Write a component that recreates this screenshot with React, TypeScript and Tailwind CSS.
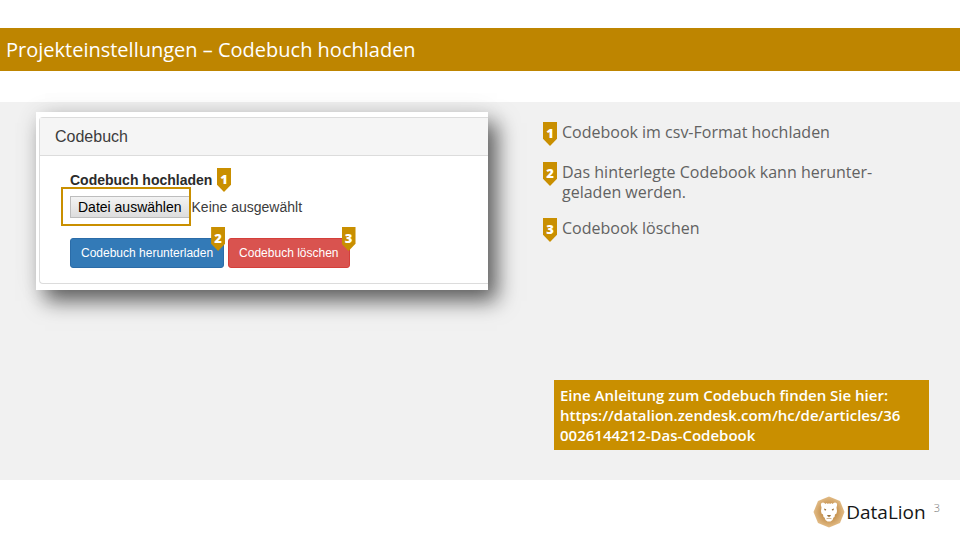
import type { ReactNode } from "react";

function Marker({ n, className = "" }: { n: number; className?: string }) {
  return (
    <span
      className={`flex h-6 w-[14px] shrink-0 justify-center bg-[#c98f00] pt-[3px] font-['Open_Sans','Noto_Sans',sans-serif] text-[13px] leading-4 font-extrabold text-white [clip-path:polygon(0_0,100%_0,100%_70%,50%_100%,0_70%)] ${className}`}
    >
      {n}
    </span>
  );
}

function Step({ n, children }: { n: number; children: ReactNode }) {
  return (
    <li className="flex gap-[5px]">
      <Marker n={n} />
      <p>{children}</p>
    </li>
  );
}

function UploadPanel() {
  return (
    <section className="bg-white pt-[5px] pb-[6px] pl-[3px] font-['Liberation_Sans',Arial,sans-serif] shadow-[9px_11px_20px_rgba(0,0,0,0.6),0_0_24px_rgba(0,0,0,0.07)]">
      <div className="rounded-l border border-r-0 border-[#dcdcdc]">
        <h2 className="border-b border-[#dcdcdc] bg-[#f5f5f5] pt-[7px] pb-[6px] pl-[15px] text-base leading-6 text-[#3c3c3c]">
          Codebuch
        </h2>
        <div className="px-[30px] pt-4 pb-[15px]">
          <label htmlFor="codebook" className="block text-sm leading-4 font-bold text-[#2b2b2b]">
            Codebuch hochladen
          </label>
          <div className="relative mt-2 flex items-center gap-[2px] text-sm leading-5">
            <input id="codebook" type="file" className="sr-only" />
            <label
              htmlFor="codebook"
              className="border border-[#bdbdbd] bg-linear-to-b from-[#f3f3f3] to-[#dddddd] px-[7px] text-black"
            >
              Datei auswählen
            </label>
            <span className="text-[#3c3c3c]">Keine ausgewählt</span>
            <span className="absolute -top-[9px] -left-[9px] h-[39px] w-[130px] border-2 border-[#c98f00]" />
            <Marker n={1} className="absolute -top-7 left-[147px]" />
          </div>
          <div className="mt-5 flex gap-1 text-[12px] leading-4 text-white">
            <div className="relative">
              <button type="button" className="rounded-[3px] border border-[#2b6ca8] bg-[#337ab7] px-[10px] py-[6px]">
                Codebuch herunterladen
              </button>
              <Marker n={2} className="absolute -top-[11px] -right-px" />
            </div>
            <div className="relative">
              <button type="button" className="rounded-[3px] border border-[#d43f3a] bg-[#d9534f] px-[10px] py-[6px]">
                Codebuch löschen
              </button>
              <Marker n={3} className="absolute -top-[11px] -right-[6px]" />
            </div>
          </div>
        </div>
      </div>
    </section>
  );
}

function Logo() {
  return (
    <div className="flex items-center gap-px">
      <svg viewBox="0 0 32 32" className="size-8" aria-hidden="true">
        <defs>
          <radialGradient id="mane">
            <stop offset="0.35" stopColor="#c08a45" />
            <stop offset="1" stopColor="#e3bd88" />
          </radialGradient>
        </defs>
        <path d="M16 0.5 27 5 31.5 16 27 27 16 31.5 5 27 0.5 16 5 5Z" fill="url(#mane)" />
        <path
          d="M8 9.500Q7.500 6.500 10 6.500Q11.500 6.500 12.500 8L13.500 7 15 8 16 7 17 8 18.500 7 19.500 8Q20.500 6.500 22 6.500Q24.500 6.500 24 9.500L23.500 11.500 24 15 23.500 17.500 22 18.500 21.500 21 20.500 21.500 19.500 24 17.500 25.500H14.500L12.500 24 11.500 21.500 10.500 21 10 18.500 8.500 17.500 8 15 8.500 11.500Z"
          fill="#fff"
        />
        <path
          d="M11 12.500 13.200 13.300 13 14.500 11.500 14.200ZM21 12.500 18.800 13.300 19 14.500 20.500 14.200ZM14 19H18L17 20.800H15Z"
          fill="#96703c"
        />
        <path d="M13.500 22.700Q16 21.900 18.500 22.700" fill="none" stroke="#c09a68" strokeWidth="0.8" />
      </svg>
      <span className="text-[19px] leading-6 text-[#161616]">DataLion</span>
    </div>
  );
}

export default function App() {
  return (
    <div className="flex min-h-screen flex-col bg-white pt-7 font-['Open_Sans','Noto_Sans',sans-serif]">
      <header className="bg-[#be8500] px-[6px] py-2">
        <h1 className="text-xl leading-[27px] text-white">Projekteinstellungen – Codebuch hochladen</h1>
      </header>
      <main className="mt-[31px] grid flex-1 grid-cols-[452fr_386fr] items-start gap-[55px] bg-[#f1f1f1] pt-[10px] pr-[31px] pb-[30px] pl-9">
        <UploadPanel />
        <div className="flex h-full flex-col justify-between pt-[10px]">
          <ol className="flex flex-col gap-4 text-base leading-5 text-[#626262]">
            <Step n={1}>Codebook im csv-Format hochladen</Step>
            <Step n={2}>
              Das hinterlegte Codebook kann herunter-
              <br />
              geladen werden.
            </Step>
            <Step n={3}>Codebook löschen</Step>
          </ol>
          <p className="ml-[11px] bg-[#c98f00] px-[6px] py-[5px] text-[15px] leading-5 font-semibold text-white">
            Eine Anleitung zum Codebuch finden Sie hier:{" "}
            <a href="https://datalion.zendesk.com/hc/de/articles/360026144212-Das-Codebook">
              https://datalion.zendesk.com/hc/de/articles/36
              <br />
              0026144212-Das-Codebook
            </a>
          </p>
        </div>
      </main>
      <footer className="flex h-[60px] items-center justify-end gap-2 pt-1 pr-5">
        <Logo />
        <span className="pb-2 text-[11px] leading-4 font-light text-[#777777]">3</span>
      </footer>
    </div>
  );
}
